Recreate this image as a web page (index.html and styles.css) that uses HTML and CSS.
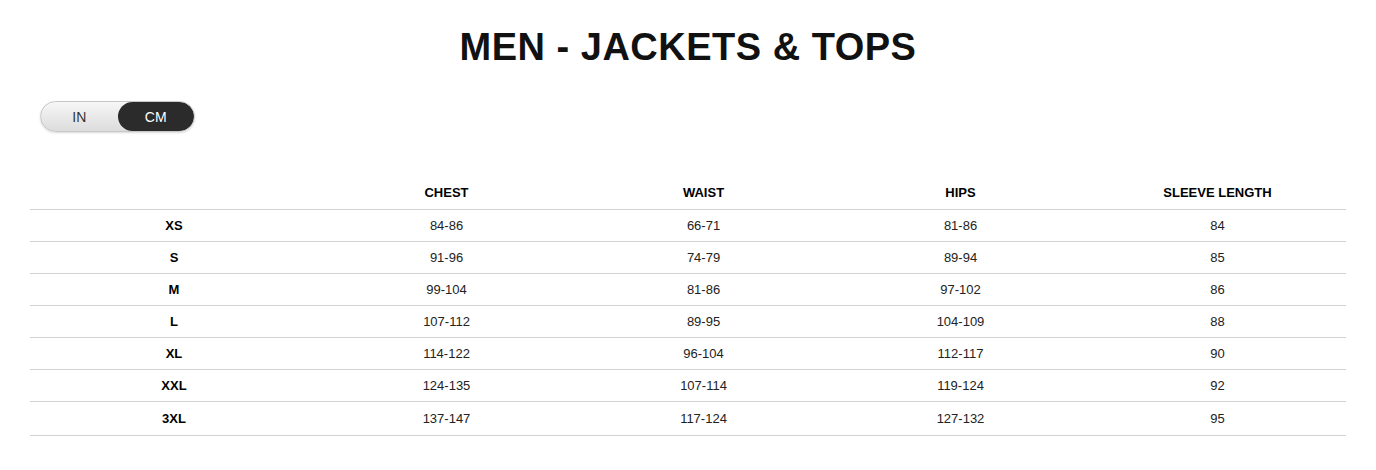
FILE: index.html
```html
<!DOCTYPE html>
<html>
<head>
<meta charset="utf-8">
<link rel="stylesheet" href="styles.css">
</head>
<body>
<div class="page">
  <h1 class="title">MEN - JACKETS &amp; TOPS</h1>
  <div class="toolbar">
    <div class="toggle">
      <span class="seg">IN</span>
      <span class="seg active">CM</span>
    </div>
  </div>
  <table class="sizes">
    <thead>
      <tr><th class="first"></th><th>CHEST</th><th>WAIST</th><th>HIPS</th><th>SLEEVE LENGTH</th></tr>
    </thead>
    <tbody>
      <tr><th>XS</th><td>84-86</td><td>66-71</td><td>81-86</td><td>84</td></tr>
      <tr><th>S</th><td>91-96</td><td>74-79</td><td>89-94</td><td>85</td></tr>
      <tr><th>M</th><td>99-104</td><td>81-86</td><td>97-102</td><td>86</td></tr>
      <tr><th>L</th><td>107-112</td><td>89-95</td><td>104-109</td><td>88</td></tr>
      <tr><th>XL</th><td>114-122</td><td>96-104</td><td>112-117</td><td>90</td></tr>
      <tr><th>XXL</th><td>124-135</td><td>107-114</td><td>119-124</td><td>92</td></tr>
      <tr><th>3XL</th><td>137-147</td><td>117-124</td><td>127-132</td><td>95</td></tr>
    </tbody>
  </table>
</div>
</body>
</html>
```

FILE: styles.css
```css
html, body {
  margin: 0;
  padding: 0;
  background: #fff;
}
body {
  font-family: "Liberation Sans", Arial, sans-serif;
  color: #000;
}
.page {
  padding: 0 30px;
}
.title {
  margin: 0;
  padding-top: 25px;
  height: 76px;
  box-sizing: border-box;
  text-align: center;
  font-size: 38px;
  font-weight: bold;
  letter-spacing: 0.5px;
  line-height: 44px;
  color: #111;
}
.toolbar {
  padding-left: 10px;
  height: 99px;
  padding-top: 25px;
  box-sizing: border-box;
}
.toggle {
  display: inline-flex;
  width: 155px;
  height: 31px;
  border-radius: 16px;
  border: 1px solid #c8c8c8;
  box-sizing: border-box;
  background: linear-gradient(#f7f7f7, #dcdcdc);
  overflow: hidden;
  box-shadow: 0 1px 2px rgba(0,0,0,0.15);
}
.seg {
  flex: 1;
  display: flex;
  align-items: center;
  justify-content: center;
  font-size: 14px;
  color: #333;
}
.seg.active {
  background: #2b2b2b;
  color: #fff;
  border-radius: 16px;
}
.sizes {
  width: 1316px;
  border-collapse: collapse;
  table-layout: fixed;
  font-size: 13px;
}
.sizes th.first {
  width: 288px;
}
.sizes thead th {
  height: 34px;
  font-weight: bold;
  text-align: center;
  border-bottom: 1px solid #d3d3d3;
  padding: 0;
  vertical-align: middle;
}
.sizes tbody th,
.sizes tbody td {
  height: 30px;
  padding: 0 0 1px;
  text-align: center;
  border-bottom: 1px solid #d3d3d3;
  color: #222;
}
.sizes tbody th {
  font-weight: bold;
  color: #000;
}
.sizes tbody tr:last-child th,
.sizes tbody tr:last-child td {
  height: 32px;
}
```
